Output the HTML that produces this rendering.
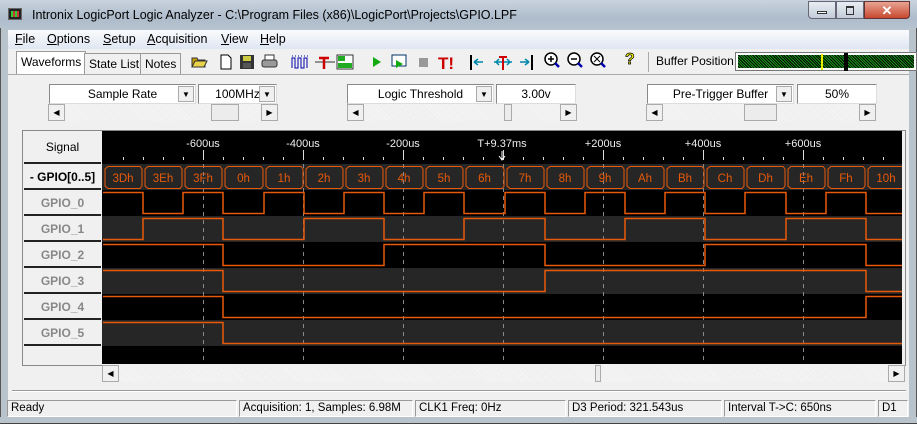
<!DOCTYPE html>
<html><head><meta charset="utf-8"><style>
*{margin:0;padding:0;box-sizing:border-box}
body{width:917px;height:424px;overflow:hidden;background:#f0f0f0;font-family:"Liberation Sans",sans-serif;font-size:12px;position:relative}
.abs{position:absolute}
.title{left:0;top:0;width:917px;height:30px;background:linear-gradient(#c9d3de,#aebccb 60%,#b6c3d0);}
.frameL{left:0;top:28px;width:8px;height:396px;background:#b9c3cc;border-left:1px solid #555}
.frameR{right:0;top:28px;width:8px;height:396px;background:#b9c3cc;border-right:1px solid #555}
.frameB{left:0;top:417px;width:917px;height:7px;background:#b9c3cc;border-bottom:1px solid #444}
.menu{left:8px;top:30px;width:901px;height:19px;background:linear-gradient(#fafbfd,#dfe6f2)}
.menu span{position:absolute;top:2px;font-size:12.5px}
.combo{background:#fff;border:1px solid #888;border-right-color:#ddd;border-bottom-color:#ddd;height:20px;text-align:center;line-height:18px}
.dd{position:absolute;top:1px;right:1px;width:16px;height:16px;background:#f0f0f0;border:1px solid #aaa;font-size:8px;line-height:15px;text-align:center}
.sb{height:17px;background:repeating-linear-gradient(45deg,#f7f7f7 0 1px,#ececec 1px 2px)}
.btn{position:absolute;top:0;width:17px;height:17px;background:#f0f0f0;border:1px solid #aaa;font-size:8px;text-align:center;line-height:15px}
.thumb{position:absolute;top:0;height:17px;background:#ececec;border:1px solid #aaa}
.tab{position:absolute;top:53px;height:22px;border:1px solid #999;border-bottom:none;background:#f0f0f0;padding:3px 4px;font-size:12px}
.stat{position:absolute;top:400px;height:17px;border:1px solid #999;border-right-color:#fff;border-bottom-color:#fff;font-size:11.5px;padding:1px 3px;white-space:nowrap;overflow:hidden}
.sig{position:absolute;left:24px;width:77px;height:26px;text-align:center;line-height:26px;color:#888;font-weight:bold;font-size:12px;border-bottom:2px solid #222;background:#f0f0f0}
</style></head><body>
<div class="abs title"></div>
<div class="abs" style="left:8px;top:8px;width:14px;height:12px;background:#222;border:1px solid #666"><div style="margin:2px;height:6px;background:repeating-linear-gradient(90deg,#3c3 0 2px,#c33 2px 4px)"></div></div>
<div class="abs" style="left:32px;top:8px;font-size:12.5px;color:#000">Intronix LogicPort Logic Analyzer - C:\Program Files (x86)\LogicPort\Projects\GPIO.LPF</div>
<div class="abs" style="left:808px;top:1px;width:28px;height:18px;border:1px solid #667;border-radius:0 0 0 4px;background:linear-gradient(#e8edf3,#c3ccd8)"><div style="margin:9px 8px 0;height:3px;border:1px solid #333;background:#fff"></div></div>
<div class="abs" style="left:836px;top:1px;width:28px;height:18px;border:1px solid #667;background:linear-gradient(#e8edf3,#c3ccd8)"><div style="margin:4px 9px;height:9px;border:1px solid #333;border-top-width:2px"></div></div>
<div class="abs" style="left:864px;top:1px;width:46px;height:18px;border:1px solid #633;border-radius:0 0 4px 0;background:linear-gradient(#e8a494,#c8482e);color:#fff;font-weight:bold;text-align:center;font-size:13px;line-height:17px">✕</div>
<div class="abs frameL"></div><div class="abs frameR"></div><div class="abs frameB"></div>
<div class="abs menu">
<span style="left:7px"><u>F</u>ile</span><span style="left:39px"><u>O</u>ptions</span><span style="left:95px"><u>S</u>etup</span><span style="left:139px"><u>A</u>cquisition</span><span style="left:213px"><u>V</u>iew</span><span style="left:252px"><u>H</u>elp</span>
</div>
<div class="abs" style="left:8px;top:49px;width:901px;height:368px;background:#f0f0f0"></div>
<div class="tab" style="left:16px;top:51px;height:24px;background:#fff">Waveforms</div>
<div class="tab" style="left:84px">State List</div>
<div class="tab" style="left:140px">Notes</div>
<div class="abs" style="left:8px;top:74px;width:901px;height:1px;background:#aaa"></div>
<!-- toolbar icons -->
<svg class="abs" style="left:190px;top:52px" width="90" height="20">
<path d="M2 15V6h5l1 2h7v7z" fill="#c9a100" stroke="#333"/><path d="M2 15l3-6h12l-3 6z" fill="#e8d24a" stroke="#333"/>
<path d="M31 3h7l3 3v11H31z" fill="#fff" stroke="#000"/>
<rect x="50" y="3" width="14" height="14" fill="#333"/><rect x="53" y="4" width="8" height="5" fill="#cc4"/><rect x="53" y="11" width="8" height="5" fill="#555"/>
<rect x="72" y="8" width="15" height="7" rx="2" fill="#999" stroke="#333"/><rect x="75" y="3" width="9" height="5" fill="#fff" stroke="#333"/>
</svg>
<svg class="abs" style="left:288px;top:52px" width="70" height="20">
<path d="M4 16V6h3v10h3V6h3v10h3V6h3v10" fill="none" stroke="#00a"/><path d="M4 4h16" stroke="#00a" stroke-dasharray="1 2"/>
<path d="M27 10h20" stroke="#333"/><path d="M31 6h10M36 6v11" stroke="#c00" stroke-width="2.5"/>
<rect x="49" y="3" width="16" height="14" fill="#fff" stroke="#333"/><rect x="50" y="4" width="7" height="5" fill="#2a2"/><rect x="50" y="11" width="14" height="5" fill="#2a2"/>
</svg>
<svg class="abs" style="left:368px;top:52px" width="95" height="20">
<path d="M5 5l8 5-8 5z" fill="#1a1"/>
<rect x="24" y="3" width="14" height="11" fill="#fff" stroke="#036"/><path d="M28 8l7 4-7 4z" fill="#1a1"/>
<rect x="51" y="6" width="9" height="9" fill="#999"/>
<text x="70" y="17" fill="#c00" font-weight="bold" font-size="17" font-family="Liberation Sans">T!</text>
</svg>
<svg class="abs" style="left:468px;top:52px" width="70" height="20">
<path d="M3 3v15" stroke="#000" stroke-width="2"/><path d="M6 10h9M6 10l4-3M6 10l4 3" stroke="#08a" stroke-width="1.5" fill="none"/>
<path d="M26 10h18M28 10l3-3M28 10l3 3M42 10l-3-3M42 10l-3 3" stroke="#08a" stroke-width="1.5" fill="none"/><path d="M31 5h8M35 5v13" stroke="#c00" stroke-width="2"/>
<path d="M64 3v15" stroke="#000" stroke-width="2"/><path d="M52 10h9M61 10l-4-3M61 10l-4 3" stroke="#08a" stroke-width="1.5" fill="none"/>
</svg>
<svg class="abs" style="left:543px;top:51px" width="70" height="22">
<circle cx="8" cy="8" r="6" fill="#fff" stroke="#000" stroke-width="1.5"/><path d="M5 8h6M8 5v6" stroke="#000" stroke-width="1.5"/><path d="M12 12l4 4" stroke="#00a" stroke-width="2.5"/>
<circle cx="31" cy="8" r="6" fill="#fff" stroke="#000" stroke-width="1.5"/><path d="M28 8h6" stroke="#000" stroke-width="1.5"/><path d="M35 12l4 4" stroke="#00a" stroke-width="2.5"/>
<circle cx="54" cy="8" r="6" fill="#fff" stroke="#000" stroke-width="1.5"/><path d="M51 5l6 6M57 5l-6 6" stroke="#000"/><path d="M58 12l4 4" stroke="#00a" stroke-width="2.5"/>
</svg>
<div class="abs" style="left:625px;top:51px;font-size:16px;color:#ee0;font-weight:bold;-webkit-text-stroke:0.7px #000">?</div>
<div class="abs" style="left:648px;top:52px;width:1px;height:20px;background:#aaa"></div>
<div class="abs" style="left:656px;top:54px;font-size:12px">Buffer Position:</div>
<div class="abs" style="left:735px;top:52px;width:182px;height:19px;border:1px solid #777;background:#fff;padding:2px"><div style="height:13px;background:repeating-linear-gradient(45deg,#1a9a1a 0 1px,#000 1px 2px)"></div></div>
<div class="abs" style="left:821px;top:54px;width:2px;height:16px;background:#ee0"></div>
<div class="abs" style="left:844px;top:53px;width:4px;height:18px;background:#000"></div>
<!-- combos -->
<div class="abs combo" style="left:49px;top:84px;width:147px">Sample Rate<div class="dd">▼</div></div>
<div class="abs combo" style="left:198px;top:84px;width:79px">100MHz<div class="dd">▼</div></div>
<div class="abs sb" style="left:48px;top:104px;width:230px"><div class="btn" style="left:0">◀</div><div class="thumb" style="left:163px;width:28px"></div><div class="btn" style="right:0">▶</div></div>
<div class="abs combo" style="left:347px;top:84px;width:147px">Logic Threshold<div class="dd">▼</div></div>
<div class="abs combo" style="left:496px;top:84px;width:80px">3.00v</div>
<div class="abs sb" style="left:347px;top:104px;width:230px"><div class="btn" style="left:0">◀</div><div class="thumb" style="left:157px;width:8px"></div><div class="btn" style="right:0">▶</div></div>
<div class="abs combo" style="left:647px;top:84px;width:147px">Pre-Trigger Buffer<div class="dd">▼</div></div>
<div class="abs combo" style="left:797px;top:84px;width:80px">50%</div>
<div class="abs sb" style="left:646px;top:104px;width:230px"><div class="btn" style="left:0">◀</div><div class="thumb" style="left:98px;width:33px"></div><div class="btn" style="right:0">▶</div></div>
<!-- wave panel -->
<div class="abs" style="left:22px;top:130px;width:884px;height:236px;border:1px solid #888;background:#f0f0f0"></div>
<div class="abs" style="left:24px;top:131px;width:77px;height:33px;text-align:center;line-height:33px;border-bottom:2px solid #222;background:#f0f0f0">Signal</div>
<div class="sig" style="top:164px;color:#000">- GPIO[0..5]</div>
<div class="sig" style="top:190px">GPIO_0</div>
<div class="sig" style="top:216px">GPIO_1</div>
<div class="sig" style="top:242px">GPIO_2</div>
<div class="sig" style="top:268px">GPIO_3</div>
<div class="sig" style="top:294px">GPIO_4</div>
<div class="sig" style="top:320px">GPIO_5</div>
<svg class="abs" style="left:102px;top:131px" width="800" height="233" xmlns="http://www.w3.org/2000/svg" font-family="Liberation Sans">
<rect width="800" height="233" fill="#000"/>
<rect y="33" width="800" height="26" fill="#262626"/>
<rect y="85" width="800" height="26" fill="#262626"/>
<rect y="137" width="800" height="26" fill="#262626"/>
<rect y="189" width="800" height="26" fill="#262626"/>
<line x1="21" y1="27.5" x2="800" y2="27.5" stroke="#ddd" stroke-width="3" stroke-dasharray="1 19"/>
<g stroke="#ddd"><path d="M101.5 19v10M201.5 19v10M301.5 19v10M401.5 19v10M501.5 19v10M601.5 19v10M701.5 19v10"/></g>
<g stroke="#888" stroke-dasharray="4 4"><path d="M101.5 33V233M201.5 33V233M301.5 33V233M401.5 33V233M501.5 33V233M601.5 33V233M701.5 33V233"/></g>
<g fill="#eee" font-size="11" text-anchor="middle">
<text x="101" y="16">-600us</text><text x="201" y="16">-400us</text><text x="301" y="16">-200us</text><text x="400" y="16">T+9.37ms</text><text x="501" y="16">+200us</text><text x="601" y="16">+400us</text><text x="701" y="16">+600us</text></g>
<path d="M400 20v8M397 25l3 4 3-4" stroke="#fff" fill="none"/>
<g fill="none" stroke="#e85a0a">
<path d="M6 35.5H38L40 38V55L38 57.5H6L3 55V38Z"/>
<path d="M46 35.5H78L80 38V55L78 57.5H46L43 55V38Z"/>
<path d="M86 35.5H118L120 38V55L118 57.5H86L83 55V38Z"/>
<path d="M126 35.5H159L161 38V55L159 57.5H126L123 55V38Z"/>
<path d="M167 35.5H199L201 38V55L199 57.5H167L164 55V38Z"/>
<path d="M207 35.5H239L241 38V55L239 57.5H207L204 55V38Z"/>
<path d="M247 35.5H279L281 38V55L279 57.5H247L244 55V38Z"/>
<path d="M287 35.5H319L321 38V55L319 57.5H287L284 55V38Z"/>
<path d="M327 35.5H359L361 38V55L359 57.5H327L324 55V38Z"/>
<path d="M367 35.5H400L402 38V55L400 57.5H367L364 55V38Z"/>
<path d="M408 35.5H440L442 38V55L440 57.5H408L405 55V38Z"/>
<path d="M448 35.5H480L482 38V55L480 57.5H448L445 55V38Z"/>
<path d="M488 35.5H520L522 38V55L520 57.5H488L485 55V38Z"/>
<path d="M528 35.5H560L562 38V55L560 57.5H528L525 55V38Z"/>
<path d="M568 35.5H600L602 38V55L600 57.5H568L565 55V38Z"/>
<path d="M608 35.5H640L642 38V55L640 57.5H608L605 55V38Z"/>
<path d="M648 35.5H681L683 38V55L681 57.5H648L645 55V38Z"/>
<path d="M689 35.5H721L723 38V55L721 57.5H689L686 55V38Z"/>
<path d="M729 35.5H761L763 38V55L761 57.5H729L726 55V38Z"/>
<path d="M769 35.5H801L803 38V55L801 57.5H769L766 55V38Z"/>
</g>
<g fill="#e85a0a" font-size="11.5" text-anchor="middle">
<text x="21" y="51">3Dh</text><text x="61" y="51">3Eh</text><text x="101" y="51">3Fh</text><text x="141.5" y="51">0h</text><text x="182" y="51">1h</text><text x="222" y="51">2h</text><text x="262" y="51">3h</text><text x="302" y="51">4h</text><text x="342" y="51">5h</text><text x="382.5" y="51">6h</text><text x="423" y="51">7h</text><text x="463" y="51">8h</text><text x="503" y="51">9h</text><text x="543" y="51">Ah</text><text x="583" y="51">Bh</text><text x="623" y="51">Ch</text><text x="663.5" y="51">Dh</text><text x="704" y="51">Eh</text><text x="744" y="51">Fh</text><text x="784" y="51">10h</text>
</g>
<g fill="none" stroke="#e85a0a" stroke-width="1.5">
<path d="M1 61.5H41V82.5H81V61.5H121V82.5H162V61.5H202V82.5H242V61.5H282V82.5H322V61.5H362V82.5H403V61.5H443V82.5H483V61.5H523V82.5H563V61.5H603V82.5H643V61.5H684V82.5H724V61.5H764V82.5H800"/>
<path d="M1 108.5H41V87.5H121V108.5H202V87.5H282V108.5H362V87.5H443V108.5H523V87.5H603V108.5H684V87.5H764V108.5H800"/>
<path d="M1 113.5H121V134.5H282V113.5H443V134.5H603V113.5H764V134.5H800"/>
<path d="M1 139.5H121V160.5H443V139.5H764V160.5H800"/>
<path d="M1 165.5H121V186.5H764V165.5H800"/>
<path d="M1 191.5H121V212.5H800"/>
</g>
</svg>
<div class="abs sb" style="left:102px;top:365px;width:803px"><div class="btn" style="left:0">◀</div><div class="thumb" style="left:493px;width:6px"></div><div class="btn" style="right:0">▶</div></div>
<div class="abs" style="left:12px;top:390px;width:894px;height:2px;border-top:1px solid #999;border-bottom:1px solid #fff"></div>
<div class="stat" style="left:7px;width:230px">Ready</div>
<div class="stat" style="left:239px;width:174px">Acquisition: 1, Samples: 6.98M</div>
<div class="stat" style="left:415px;width:151px">CLK1 Freq: 0Hz</div>
<div class="stat" style="left:568px;width:154px">D3 Period: 321.543us</div>
<div class="stat" style="left:724px;width:152px">Interval T-&gt;C: 650ns</div>
<div class="stat" style="left:878px;width:30px">D1</div>
</body></html>
